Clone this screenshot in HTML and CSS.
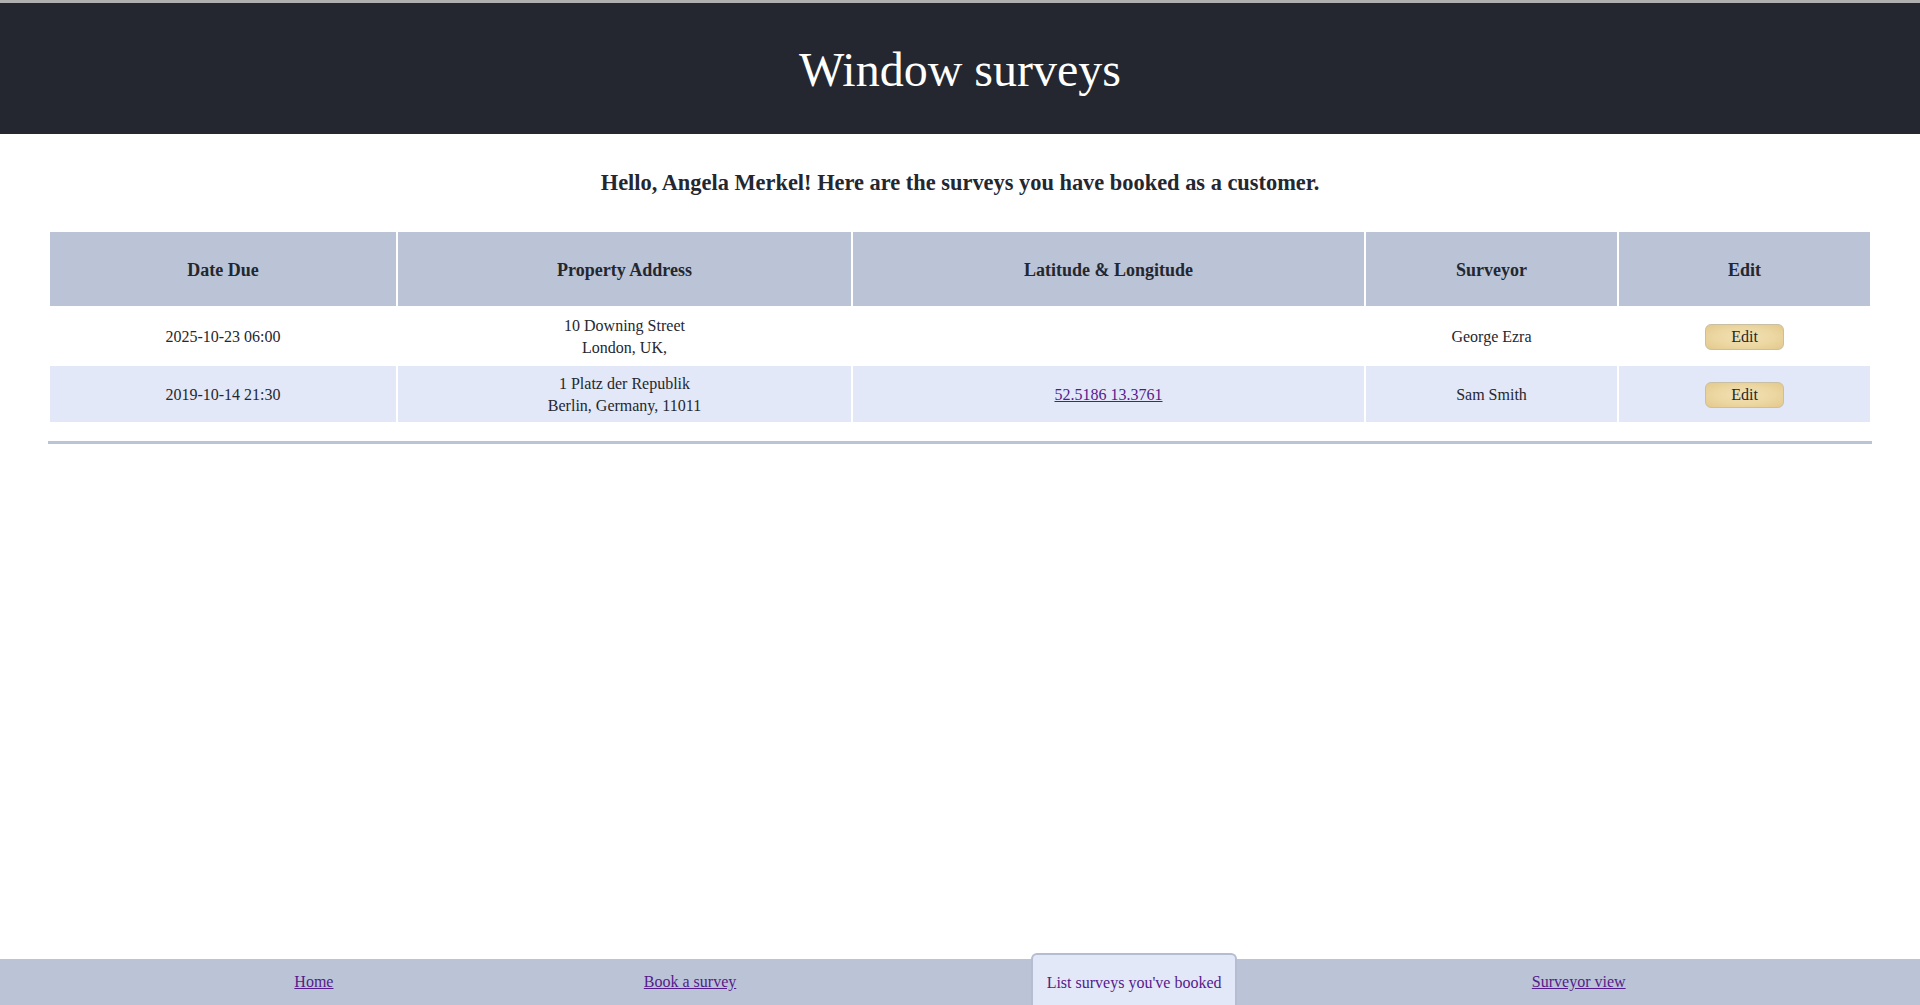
FILE: index.html
```html
<!DOCTYPE html>
<html lang="en">
<head>
<meta charset="utf-8">
<title>Window surveys</title>
<link rel="stylesheet" href="styles.css">
</head>
<body>
<header class="site-header">
  <h1 class="site-title">Window surveys</h1>
</header>
<main class="content">
  <h2 class="greeting">Hello, Angela Merkel! Here are the surveys you have booked as a customer.</h2>
  <div class="table-wrap">
    <table class="surveys">
      <thead>
        <tr>
          <th class="col-date">Date Due</th>
          <th class="col-addr">Property Address</th>
          <th class="col-geo">Latitude &amp; Longitude</th>
          <th class="col-surveyor">Surveyor</th>
          <th class="col-edit">Edit</th>
        </tr>
      </thead>
      <tbody>
        <tr class="row-odd">
          <td>2025-10-23 06:00</td>
          <td>10 Downing Street<br>London, UK,</td>
          <td></td>
          <td>George Ezra</td>
          <td><button class="edit-btn" type="button">Edit</button></td>
        </tr>
        <tr class="row-even">
          <td>2019-10-14 21:30</td>
          <td>1 Platz der Republik<br>Berlin, Germany, 11011</td>
          <td><a class="geo-link" href="#">52.5186 13.3761</a></td>
          <td>Sam Smith</td>
          <td><button class="edit-btn" type="button">Edit</button></td>
        </tr>
      </tbody>
    </table>
  </div>
</main>
<nav class="bottom-nav">
  <a class="nav-link" href="#">Home</a>
  <a class="nav-link" href="#">Book a survey</a>
  <a class="nav-link nav-active" href="#">List surveys you've booked</a>
  <a class="nav-link" href="#">Surveyor view</a>
</nav>
</body>
</html>
```
FILE: styles.css
```css
html, body {
  margin: 0;
  padding: 0;
}

body {
  font-family: "Liberation Serif", "Times New Roman", serif;
  color: #24272f;
  background: #ffffff;
  min-height: 100vh;
  display: flex;
  flex-direction: column;
}

.site-header {
  background: #24272f;
  border-top: 3px solid #b0b0b0;
  height: 131px;
  display: flex;
  align-items: center;
  justify-content: center;
}

.site-title {
  margin: 0;
  color: #ffffff;
  font-size: 48px;
  font-weight: normal;
  line-height: 1;
  padding-top: 2px;
}

.content {
  padding: 34px 48px 0;
}

.greeting {
  margin: 0 0 33px;
  text-align: center;
  font-size: 22.4px;
  font-weight: bold;
  line-height: 30px;
  color: #24272f;
}

.table-wrap {
  border-bottom: 3px solid #bbc4d7;
  padding-bottom: 17px;
}

.surveys {
  width: 100%;
  border-collapse: separate;
  border-spacing: 2px;
  margin-top: -1px;
}

.surveys th {
  background: #bbc4d7;
  height: 74px;
  padding: 2px 6px 0;
  font-size: 18px;
  font-weight: bold;
  color: #24272f;
  text-align: center;
  vertical-align: middle;
  box-sizing: border-box;
}

.col-date { width: 346px; }
.col-addr { width: 453px; }
.col-geo { width: 511px; }
.col-surveyor { width: 251px; }
.col-edit { width: 251px; }

.surveys td {
  height: 56px;
  padding: 7px 6px 5px;
  box-sizing: border-box;
  font-size: 16px;
  line-height: 22px;
  text-align: center;
  vertical-align: middle;
  color: #24272f;
}

.row-odd td {
  background: #ffffff;
}

.row-even td {
  background: #e2e8f7;
}

.geo-link {
  color: #551a8b;
  text-decoration: underline;
}

.edit-btn {
  font-family: "Liberation Serif", "Times New Roman", serif;
  font-size: 16px;
  color: #24272f;
  width: 79px;
  height: 26px;
  padding: 0;
  border: 1px solid #c9c0a4;
  border-radius: 6px;
  background: radial-gradient(ellipse at center, #f2e1b4 0%, #ecd7a2 55%, #e3c88b 100%);
  cursor: pointer;
  vertical-align: middle;
}

.bottom-nav {
  margin-top: auto;
  height: 46px;
  background: #bbc4d7;
  display: flex;
  justify-content: space-evenly;
  align-items: stretch;
}

.nav-link {
  display: flex;
  align-items: center;
  padding: 0 16px;
  font-size: 16px;
  color: #551a8b;
  text-decoration: underline;
}

.nav-active {
  text-decoration: none;
  background: #e2e8f7;
  border: 2px solid #b4bdd2;
  border-bottom: none;
  border-radius: 6px 6px 0 0;
  margin-top: -6px;
  padding: 6px 14px 0;
}
```
